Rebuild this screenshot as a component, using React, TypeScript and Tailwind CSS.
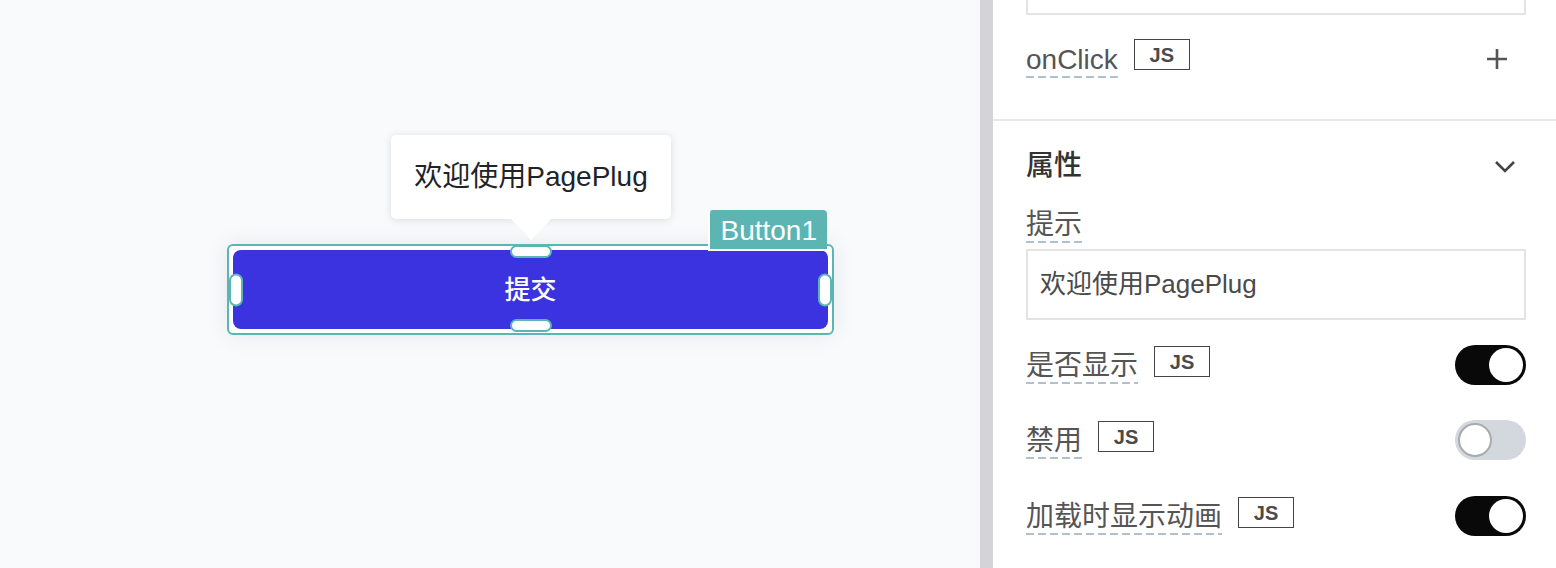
import React from "react";

const FONT = {
  fontFamily: '"Liberation Sans", "Noto Sans CJK SC", sans-serif',
};

function Label({ children }: { children: React.ReactNode }) {
  return (
    <span className="inline-block text-[28px] leading-[36px] text-[#555555] bg-[repeating-linear-gradient(to_right,#b2bfcd_0px,#b2bfcd_8px,transparent_8px,transparent_12px)] bg-no-repeat bg-bottom bg-[length:100%_2px]">
      {children}
    </span>
  );
}

function JsBox() {
  return (
    <span className="inline-flex items-center justify-center w-[56px] h-[31px] border border-[#444] text-[20px] font-bold text-[#4a4a4a] leading-none">
      JS
    </span>
  );
}

function Toggle({ on }: { on: boolean }) {
  if (on) {
    return (
      <div className="w-[71px] h-[40px] rounded-full bg-[#090909] p-[3px] flex justify-end">
        <div className="w-[34px] h-[34px] rounded-full bg-white" />
      </div>
    );
  }
  return (
    <div className="w-[71px] h-[40px] rounded-full bg-[#d3d7de] p-[3px] flex justify-start">
      <div className="w-[34px] h-[34px] rounded-full bg-white border-2 border-[#a9abae]" />
    </div>
  );
}

function Handle({ vertical }: { vertical?: boolean }) {
  return (
    <div
      className={
        vertical
          ? "w-[14px] h-[33px] rounded-full bg-white border-2 border-[#5bb5b3]"
          : "w-[42px] h-[13px] rounded-full bg-white border-2 border-[#5bb5b3]"
      }
    />
  );
}

export default function App() {
  return (
    <div style={FONT} className="flex w-[1556px] h-[568px] overflow-hidden">
      {/* Canvas */}
      <div className="relative w-[980px] h-full bg-[#f8fafc]">
        <div className="absolute left-[227px] top-[244px] w-[607px] h-[91px] rounded-[6px] border-2 border-[#5bb5b3] bg-white p-[4px] shadow-[0_0_24px_rgba(15,23,42,0.08)]">
          <div className="w-full h-full rounded-[8px] bg-[#3b32e0] flex items-center justify-center text-white text-[26px] font-medium pt-[2px]">
            提交
          </div>
          {/* Tooltip */}
          <div className="absolute left-[162px] bottom-[114px] w-[280px] h-[84px] rounded-[5px] bg-white shadow-[0_1px_8px_rgba(0,0,0,0.12)] flex items-center justify-center text-[28px] text-[#1f2328]">
            欢迎使用PagePlug
            <div className="absolute left-1/2 top-full -translate-x-1/2 w-0 h-0 border-l-[20px] border-r-[20px] border-t-[21px] border-l-transparent border-r-transparent border-t-white" />
          </div>
          {/* Name tag */}
          <div className="absolute right-[5px] top-[-36px] h-[41px] px-[10px] rounded-t-[4px] bg-[#5cb5b3] text-white text-[28px] leading-[41px] border-l-2 border-b-2 border-white">
            Button1
          </div>
          {/* Handles */}
          <div className="absolute left-1/2 -translate-x-1/2 top-[-1px]">
            <Handle />
          </div>
          <div className="absolute left-1/2 -translate-x-1/2 bottom-[1px]">
            <Handle />
          </div>
          <div className="absolute top-1/2 -translate-y-1/2 left-[0px]">
            <Handle vertical />
          </div>
          <div className="absolute top-1/2 -translate-y-1/2 right-[0px]">
            <Handle vertical />
          </div>
        </div>
      </div>

      {/* Divider bar */}
      <div className="w-[13px] h-full bg-[#d3d3d8]" />

      {/* Property panel */}
      <div className="flex-1 h-full bg-white flex flex-col">
        <div className="pl-[33px] pr-[30px]">
          <div className="h-[15px] border-x-2 border-b-2 border-[#e3e3e3]" />
          <div className="mt-[27px] flex items-start justify-between">
            <div className="flex items-start gap-[16px]">
              <Label>onClick</Label>
              <div className="-mt-[3px]">
                <JsBox />
              </div>
            </div>
            <svg className="mt-[6px] mr-[18px]" width="22" height="22" viewBox="0 0 22 22">
              <path d="M11 1v20M1 11h20" stroke="#555" strokeWidth="2.6" />
            </svg>
          </div>
          <div className="h-[41px]" />
        </div>
        <div className="h-[2px] bg-[#e8e8e8]" />
        <div className="pl-[33px] pr-[30px]">
          <div className="mt-[27px] h-[36px] flex items-center justify-between">
            <span className="text-[28px] font-medium text-[#333]">属性</span>
            <svg className="mr-[10px]" width="22" height="13" viewBox="0 0 22 13">
              <path d="M2 2l9 9 9-9" fill="none" stroke="#444" strokeWidth="2.6" />
            </svg>
          </div>
          <div className="mt-[23px]">
            <Label>提示</Label>
          </div>
          <div className="mt-[6px] h-[71px] border-2 border-[#e3e3e3] flex items-center pl-[12px] text-[26px] text-[#4a4a4a]">
            欢迎使用PagePlug
          </div>
          <div className="mt-[25px] flex items-start justify-between">
            <div className="flex items-start gap-[16px] mt-[3px]">
              <Label>是否显示</Label>
              <div className="-mt-[2px]">
                <JsBox />
              </div>
            </div>
            <Toggle on />
          </div>
          <div className="mt-[35px] flex items-start justify-between">
            <div className="flex items-start gap-[16px] mt-[3px]">
              <Label>禁用</Label>
              <div className="-mt-[2px]">
                <JsBox />
              </div>
            </div>
            <Toggle on={false} />
          </div>
          <div className="mt-[36px] flex items-start justify-between">
            <div className="flex items-start gap-[16px] mt-[3px]">
              <Label>加载时显示动画</Label>
              <div className="-mt-[2px]">
                <JsBox />
              </div>
            </div>
            <Toggle on />
          </div>
        </div>
      </div>
    </div>
  );
}
